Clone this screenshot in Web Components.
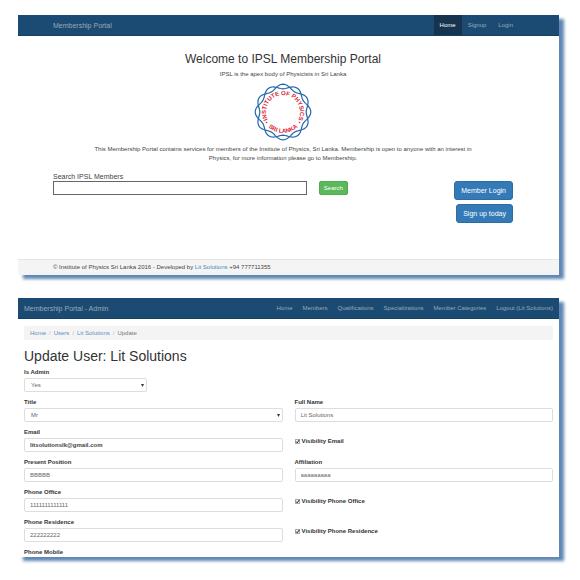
<!DOCTYPE html>
<html lang="en">
<head>
<meta charset="utf-8">
<title>Membership Portal</title>
<style>
  body { margin: 0; background: #fff; color: #444; font: 6px/10px "Liberation Sans", Arial, sans-serif; }
</style>
</head>
<body>
<portal-app></portal-app>
<script>
const define = (name, html, setup) => customElements.define(name, class extends HTMLElement {
  constructor() {
    super();
    this.attachShadow({ mode: "open" }).innerHTML = html;
  }
  connectedCallback() { if (setup) setup(this, this.shadowRoot); }
});

define("portal-panel", `
<style>
  :host { display: block; background: #fff; box-shadow: 5px 4px 3px #5f87b3; }
</style><slot></slot>`);

define("portal-nav", `
<style>
  :host { display: flex; justify-content: space-between; background: #1b4b72; color: #9aa9b5;
    height: 21px; line-height: 21px; box-sizing: border-box; border-bottom: 1px solid #15405f; }
  :host([wide]) { padding: 0 6px; }
  :host(:not([wide])) { padding: 0 40px 0 35px; }
  .brand { color: inherit; text-decoration: none; font-size: 7px; }
  nav { display: flex; }
  :host([wide]) nav { gap: 10px; }
</style>
<a class="brand" href="#"></a><nav><slot></slot></nav>`,
(el, root) => { root.querySelector(".brand").textContent = el.getAttribute("brand"); });

define("nav-link", `
<style>
  :host { display: block; }
  :host([padded]) { padding: 0 6px; }
  :host([active]) { background: #16344f; color: #fff; }
  a { color: inherit; text-decoration: none; }
</style>
<a href="#"><slot></slot></a>`);

define("ipsl-logo", `
<style>
  :host { display: block; }
  svg { display: block; margin: 0 auto; width: 58px; height: 58px; }
  text { font: bold 6px "Liberation Sans", Arial, sans-serif; fill: #e0242f; }
</style>
<svg viewBox="-29 -29 58 58" role="img" aria-label="Institute of Physics Sri Lanka">
  <defs>
    <path id="top" d="M0 17A17 17 0 0 1 0 -17A17 17 0 0 1 0 17"/>
    <path id="bottom" d="M-21 0A21 21 0 0 0 21 0"/>
  </defs>
  <g fill="none" stroke="#1f66b0" stroke-width="1.2"><path class="wave"/><path class="wave"/></g>
  <text text-anchor="middle"><textPath href="#top" startOffset="50%">INSTITUTE OF PHYSICS</textPath></text>
  <text text-anchor="middle"><textPath href="#bottom" startOffset="50%">SRI LANKA</textPath></text>
  <circle cx="-16.5" cy="10.5" r=".8" fill="#e0242f"/><circle cx="16.5" cy="10.5" r=".8" fill="#e0242f"/>
</svg>`,
(el, root) => {
  root.querySelectorAll(".wave").forEach((path, i) => {
    const points = [];
    for (let a = 0; a < 360; a += 3) {
      const t = a * Math.PI / 180;
      const r = 25.5 + (i ? -2.3 : 2.3) * Math.cos(6 * t);
      points.push((r * Math.sin(t)).toFixed(2) + " " + (-r * Math.cos(t)).toFixed(2));
    }
    path.setAttribute("d", "M" + points.join("L") + "Z");
  });
});

define("portal-button", `
<style>
  :host { display: block; }
  button { display: block; font: inherit; color: #fff; cursor: pointer; margin: 0; box-sizing: border-box;
    background: #337ab7; border: 1px solid #2e6da4; border-radius: 3px; font-size: 7px; height: 19px; padding: 0 6px; }
  :host([kind=success]) button { background: #5cb85c; border-color: #4cae4c; border-radius: 2px;
    font-size: 6px; height: 14px; padding: 0 4px; }
</style>
<button type="button"><slot></slot></button>`);

define("member-search", `
<style>
  :host { display: grid; grid-template-columns: 17fr 13fr; column-gap: 12px; }
  label { grid-column: 1 / -1; font-size: 7px; line-height: 9px; }
  input { width: 100%; height: 14px; box-sizing: border-box; border: 1px solid #666; background: #fff;
    font: inherit; padding: 0 4px; margin: 0; }
  .side { display: flex; justify-content: space-between; align-items: flex-start; }
  .actions { display: flex; flex-direction: column; align-items: flex-end; gap: 4px; }
</style>
<label for="q">Search IPSL Members</label>
<input id="q" type="text">
<div class="side">
  <portal-button kind="success">Search</portal-button>
  <div class="actions">
    <portal-button>Member Login</portal-button>
    <portal-button>Sign up today</portal-button>
  </div>
</div>`);

define("home-page", `
<style>
  :host { display: block; }
  main { padding: 15px 46px 36px 35px; text-align: center; }
  h1 { margin: 0; font-weight: 400; font-size: 12px; line-height: 16px; color: #333; }
  p { margin: 0; font-size: 6px; line-height: 9px; }
  .tag { margin-top: 2px; line-height: 10px; }
  ipsl-logo { margin: 4px 0; }
  .intro { padding: 0 34px; }
  member-search { margin-top: 9px; text-align: left; }
  footer { background: #f4f4f4; border-top: 1px solid #e6e6e6; padding: 0 35px; line-height: 15px; }
  footer a { color: #4a87c0; text-decoration: none; }
</style>
<portal-nav brand="Membership Portal">
  <nav-link padded active>Home</nav-link><nav-link padded>Signup</nav-link><nav-link padded>Login</nav-link>
</portal-nav>
<main>
  <h1>Welcome to IPSL Membership Portal</h1>
  <p class="tag">IPSL is the apex body of Physicists in Sri Lanka</p>
  <ipsl-logo></ipsl-logo>
  <p class="intro">This Membership Portal contains services for members of the Institute of Physics, Sri Lanka. Membership is open to anyone with an interest in Physics, for more information please go to Membership.</p>
  <member-search></member-search>
</main>
<footer>© Institute of Physics Sri Lanka 2016 - Developed by <a href="#">Lit Solutions</a> +94 777711355</footer>`);

define("text-field", `
<style>
  :host { display: block; }
  label { display: block; font-weight: 700; color: #333; margin-bottom: 1px; }
  input { display: block; width: 100%; height: 14px; box-sizing: border-box; border: 1px solid #ddd; border-radius: 2px;
    background: #fff; color: #666; font: inherit; padding: 0 5px; margin: 0; }
  :host([strong]) input { color: #444; font-weight: 700; }
  :host([folded]) input { display: none; }
  :host([folded]) label { margin: 0; }
</style>
<label for="f"></label><input id="f" type="text">`,
(el, root) => {
  root.querySelector("label").textContent = el.getAttribute("label");
  root.querySelector("input").value = el.getAttribute("value") || "";
});

define("select-field", `
<style>
  :host { display: block; }
  label { display: block; font-weight: 700; color: #333; margin-bottom: 1px; }
  .box { display: grid; align-items: center; }
  .box > * { grid-area: 1 / 1; }
  select { appearance: none; width: 100%; height: 14px; box-sizing: border-box; border: 1px solid #ddd; border-radius: 2px;
    background: #fff; color: #666; font: inherit; padding: 0 6px; margin: 0; }
  svg { justify-self: end; margin-right: 3px; width: 3px; height: 3px; pointer-events: none; }
</style>
<label for="s"></label>
<div class="box"><select id="s"><option></option></select>
<svg viewBox="0 0 3 3" aria-hidden="true"><path d="M0 0H3L1.5 3Z" fill="#333"/></svg></div>`,
(el, root) => {
  root.querySelector("label").textContent = el.getAttribute("label");
  root.querySelector("option").textContent = el.getAttribute("value");
});

define("check-field", `
<style>
  :host { display: flex; align-items: center; padding-top: 3px; }
  label { display: flex; align-items: center; gap: 2px; font-weight: 700; color: #333; }
  .box { display: grid; width: 5px; height: 5px; }
  .box > * { grid-area: 1 / 1; width: 5px; height: 5px; }
  input { appearance: none; margin: 0; box-sizing: border-box; border: 1px solid #aaa; background: #eee; }
  input:not(:checked) + svg { visibility: hidden; }
  svg { pointer-events: none; }
</style>
<label><span class="box"><input type="checkbox" checked>
<svg viewBox="0 0 5 5" aria-hidden="true"><path d="M1 2.5L2.2 3.8L4.4 .8" fill="none" stroke="#222" stroke-width="1"/></svg></span><slot></slot></label>`);

define("bread-crumbs", `
<style>
  :host { display: block; }
  nav { background: #f4f4f4; border-radius: 2px; padding: 0 6px; line-height: 14px; color: #777; }
  ol { display: flex; list-style: none; margin: 0; padding: 0; }
  li + li::before { content: "/"; color: #bbb; padding: 0 3px; }
  a { color: #5a90c4; text-decoration: none; }
</style>
<nav aria-label="Breadcrumb"><ol><li><a href="#">Home</a></li><li><a href="#">Users</a></li><li><a href="#">Lit Solutions</a></li><li>Update</li></ol></nav>`);

define("admin-page", `
<style>
  :host { display: block; }
  main { padding: 7px 6px 0; }
  h1 { margin: 8px 0 3px; font-weight: 400; font-size: 14px; line-height: 16px; color: #333; }
  form { display: grid; grid-template-columns: repeat(4, 1fr); column-gap: 12px; row-gap: 5px; }
  form > * { grid-column: span 2; }
  .quarter { grid-column: 1 / 2; }
  .left { grid-column: 1 / 3; }
</style>
<portal-nav wide brand="Membership Portal - Admin">
  <nav-link>Home</nav-link><nav-link>Members</nav-link><nav-link>Qualifications</nav-link><nav-link>Specializations</nav-link><nav-link>Member Categories</nav-link><nav-link>Logout (Lit Solutions)</nav-link>
</portal-nav>
<main>
  <bread-crumbs></bread-crumbs>
  <h1>Update User: Lit Solutions</h1>
  <form>
    <select-field class="quarter" label="Is Admin" value="Yes"></select-field>
    <select-field class="left" label="Title" value="Mr"></select-field>
    <text-field label="Full Name" value="Lit Solutions"></text-field>
    <text-field label="Email" value="litsolutionslk@gmail.com" strong></text-field>
    <check-field>Visibility Email</check-field>
    <text-field label="Present Position" value="BBBBB"></text-field>
    <text-field label="Affiliation" value="aaaaaaaaa"></text-field>
    <text-field label="Phone Office" value="1111111111111"></text-field>
    <check-field>Visibility Phone Office</check-field>
    <text-field label="Phone Residence" value="222222222"></text-field>
    <check-field>Visibility Phone Residence</check-field>
    <text-field label="Phone Mobile" folded></text-field>
  </form>
</main>`);

define("portal-app", `
<style>
  :host { display: flex; flex-direction: column; gap: 23px; padding: 15px 21px 20px 18px; }
</style>
<portal-panel><home-page></home-page></portal-panel>
<portal-panel><admin-page></admin-page></portal-panel>`);
</script>
</body>
</html>
